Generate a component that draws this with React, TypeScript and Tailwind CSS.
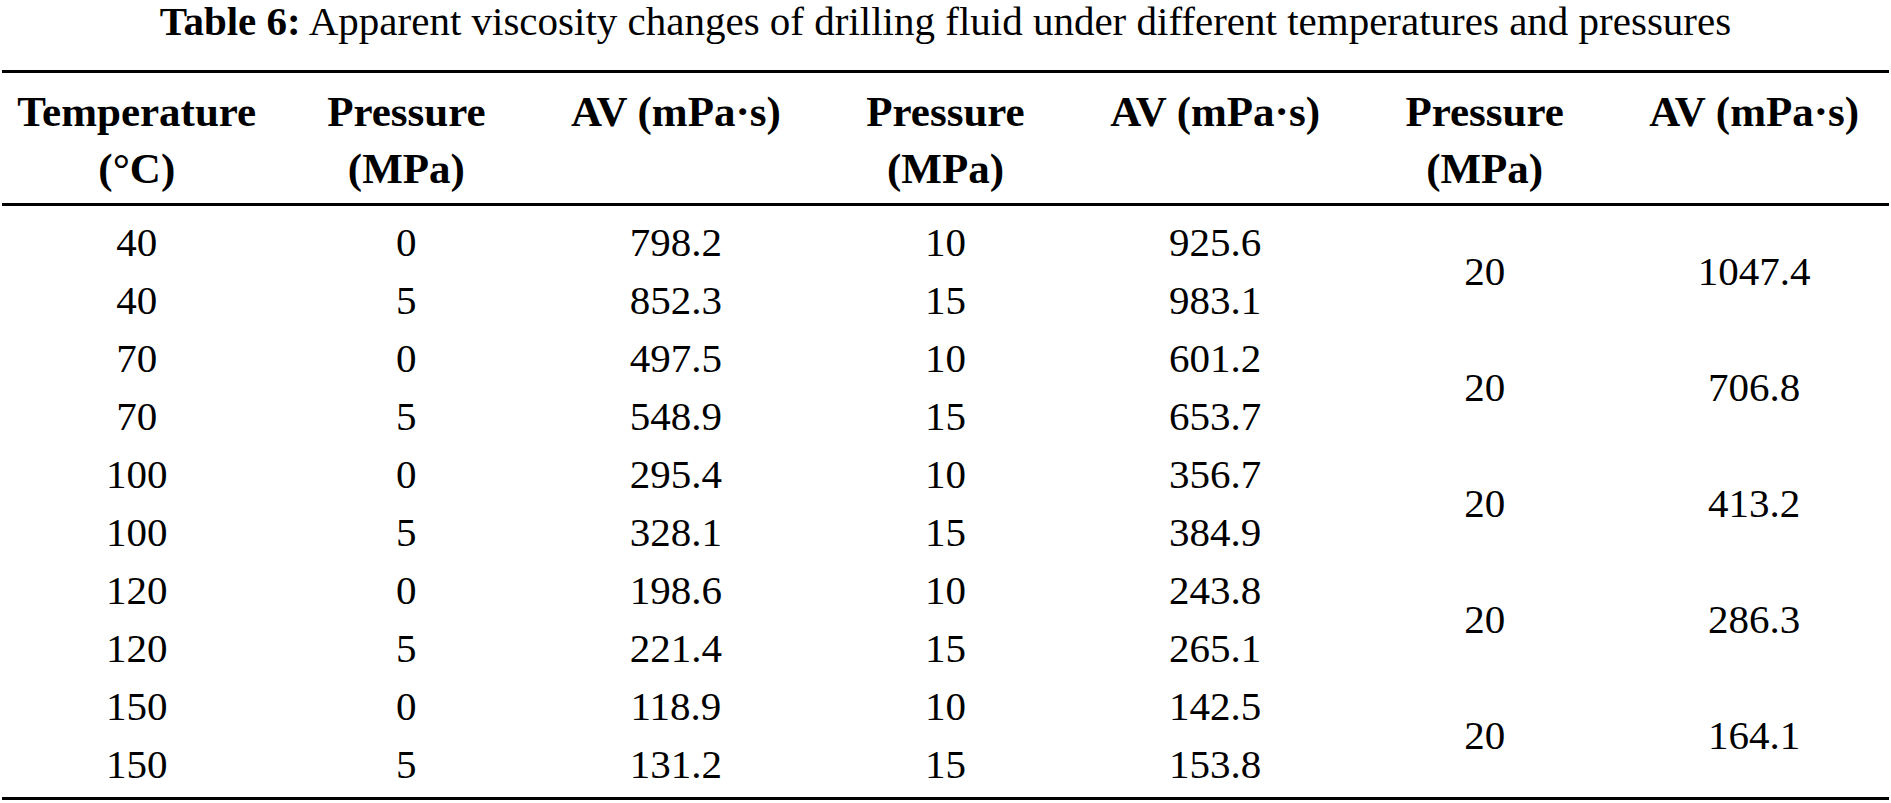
const headers: string[][] = [
  ['Temperature', '(°C)'],
  ['Pressure', '(MPa)'],
  ['AV (mPa·s)'],
  ['Pressure', '(MPa)'],
  ['AV (mPa·s)'],
  ['Pressure', '(MPa)'],
  ['AV (mPa·s)'],
]

// each group: two temperature rows sharing one 20 MPa value
const groups = [
  { t: '40', rows: [['0', '798.2', '10', '925.6'], ['5', '852.3', '15', '983.1']], av20: '1047.4' },
  { t: '70', rows: [['0', '497.5', '10', '601.2'], ['5', '548.9', '15', '653.7']], av20: '706.8' },
  { t: '100', rows: [['0', '295.4', '10', '356.7'], ['5', '328.1', '15', '384.9']], av20: '413.2' },
  { t: '120', rows: [['0', '198.6', '10', '243.8'], ['5', '221.4', '15', '265.1']], av20: '286.3' },
  { t: '150', rows: [['0', '118.9', '10', '142.5'], ['5', '131.2', '15', '153.8']], av20: '164.1' },
]

function Cell({ children }: { children: React.ReactNode }) {
  return <div className="h-[58px] pt-[10px] text-center leading-[48px]">{children}</div>
}

function SpanCell({ children }: { children: React.ReactNode }) {
  return (
    <div className="row-span-2 flex items-center justify-center pt-[10px] leading-[48px]">
      {children}
    </div>
  )
}

export default function App() {
  return (
    <div
      className="min-h-screen bg-white px-[2px] text-black"
      style={{ fontFamily: '"Liberation Serif", "Times New Roman", serif' }}
    >
      {/* Caption */}
      <div className="text-center text-[41px] leading-[42px]">
        <span className="font-bold">Table 6:</span> Apparent viscosity changes of drilling fluid under different
        temperatures and pressures
      </div>

      {/* Table */}
      <div className="mt-[28px] border-t-[3px] border-b-[3px] border-black">
        <div className="grid grid-cols-7 border-b-[3px] border-black pt-[10px] pb-[6px] text-[43px] font-bold leading-[57px]">
          {headers.map((h, i) => (
            <div key={i} className="text-center">
              {h.map(line => (
                <div key={line}>{line}</div>
              ))}
            </div>
          ))}
        </div>

        <div className="grid grid-cols-7 pt-[2px] pb-[9px] text-[41px]">
          {groups.map(g => (
            <div key={g.t} className="contents">
              <Cell>{g.t}</Cell>
              <Cell>{g.rows[0][0]}</Cell>
              <Cell>{g.rows[0][1]}</Cell>
              <Cell>{g.rows[0][2]}</Cell>
              <Cell>{g.rows[0][3]}</Cell>
              <SpanCell>20</SpanCell>
              <SpanCell>{g.av20}</SpanCell>
              <Cell>{g.t}</Cell>
              <Cell>{g.rows[1][0]}</Cell>
              <Cell>{g.rows[1][1]}</Cell>
              <Cell>{g.rows[1][2]}</Cell>
              <Cell>{g.rows[1][3]}</Cell>
            </div>
          ))}
        </div>
      </div>
    </div>
  )
}
